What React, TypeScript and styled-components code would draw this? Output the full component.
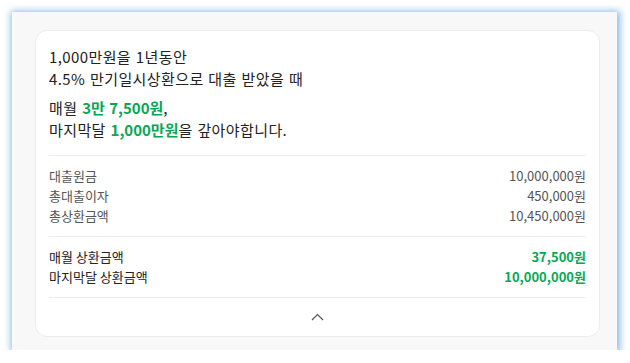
import React from "react";
import styled, { createGlobalStyle } from "styled-components";

const GlobalStyle = createGlobalStyle`
  html, body {
    margin: 0;
    padding: 0;
    background: #ffffff;
  }
  body {
    font-family: "Noto Sans CJK KR", "Noto Sans", sans-serif;
    color: #222;
  }
`;

const green = "#07a853";

type Row = { label: string; value: string };

const detailRows: Row[] = [
  { label: "대출원금", value: "10,000,000원" },
  { label: "총대출이자", value: "450,000원" },
  { label: "총상환금액", value: "10,450,000원" },
];

const payRows: Row[] = [
  { label: "매월 상환금액", value: "37,500원" },
  { label: "마지막달 상환금액", value: "10,000,000원" },
];

function App() {
  return (
    <>
      <GlobalStyle />
      <Window>
        <Card>
          <Intro>
            <p>1,000만원을 1년동안</p>
            <p>4.5% 만기일시상환으로 대출 받았을 때</p>
          </Intro>
          <Summary>
            <p>
              매월 <Em>3만 7,500원</Em>,
            </p>
            <p>
              마지막달 <Em>1,000만원</Em>을 갚아야합니다.
            </p>
          </Summary>
          <Divider />
          <Table>
            {detailRows.map((row) => (
              <TableRow key={row.label} $strong={false}>
                <span>{row.label}</span>
                <span>{row.value}</span>
              </TableRow>
            ))}
          </Table>
          <Divider />
          <Table>
            {payRows.map((row) => (
              <TableRow key={row.label} $strong>
                <span>{row.label}</span>
                <span>{row.value}</span>
              </TableRow>
            ))}
          </Table>
          <Divider />
          <Toggle type="button" aria-label="접기">
            <svg width="13" height="8" viewBox="0 0 13 8">
              <polyline
                points="1,7 6.5,1.5 12,7"
                fill="none"
                stroke="#555"
                strokeWidth="1.2"
              />
            </svg>
          </Toggle>
        </Card>
      </Window>
    </>
  );
}

const Window = styled.div`
  box-sizing: border-box;
  margin: 12px 0 0 12px;
  width: 605px;
  height: 338px;
  padding: 18px 17px 13px 23px;
  background: #f8f8f8;
  box-shadow: 1px 1px 7px 2px rgba(48, 130, 210, 0.55);
`;

const Card = styled.div`
  box-sizing: border-box;
  height: 307px;
  padding: 15px 13px 0 13px;
  background: #fff;
  border: 1px solid #ececec;
  border-radius: 12px;
  display: flex;
  flex-direction: column;
`;

const Intro = styled.div`
  font-size: 15px;
  line-height: 22px;
  color: #222;
  letter-spacing: 0.4px;
  word-spacing: 1px;

  p {
    margin: 0;
  }
`;

const Summary = styled(Intro)`
  margin: 7px 0 14px;
`;

const Em = styled.b`
  color: ${green};
  font-weight: 700;
  letter-spacing: 0;
`;

const Divider = styled.hr`
  margin: 0;
  border: 0;
  height: 1px;
  background: #ececec;
`;

const Table = styled.div`
  display: flex;
  flex-direction: column;
  padding: 10px 0;
`;

const TableRow = styled.div<{ $strong: boolean }>`
  display: flex;
  justify-content: space-between;
  font-size: 13px;
  line-height: 20px;
  color: ${(p) => (p.$strong ? "#222" : "#555")};

  span:last-child {
    color: ${(p) => (p.$strong ? green : "#555")};
    font-weight: ${(p) => (p.$strong ? 700 : 400)};
  }
`;

const Toggle = styled.button`
  align-self: center;
  margin-top: 15px;
  padding: 0;
  border: 0;
  background: none;
  display: flex;
  cursor: pointer;
`;

export default App;
